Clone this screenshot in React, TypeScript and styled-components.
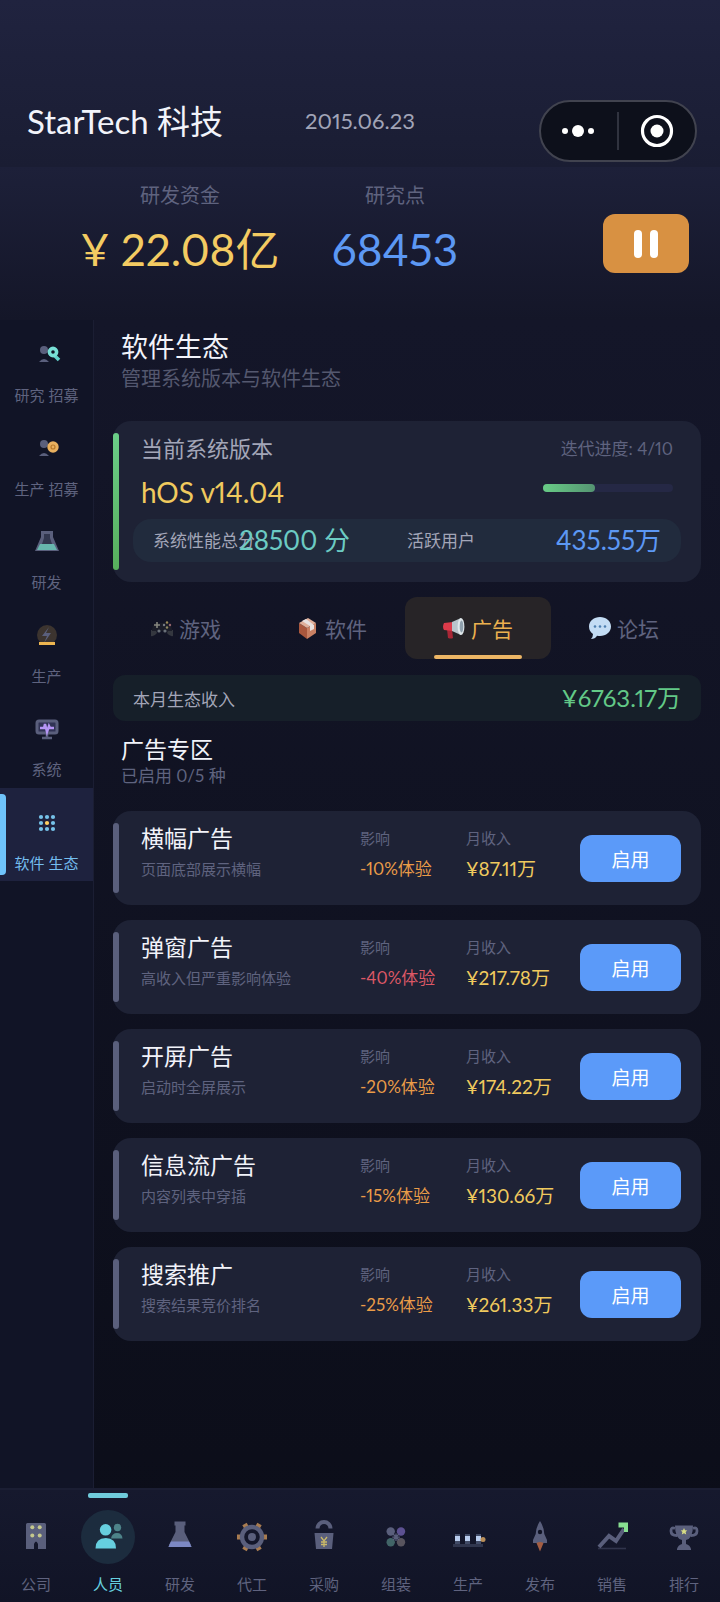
import React, { FC, ReactNode } from 'react';
import styled, { createGlobalStyle } from "styled-components";

const GlobalStyle = createGlobalStyle`
    * {
        box-sizing: border-box;
    }

    body {
        margin: 0;
        background: #0d0f1b;
        color: #f2f3fa;
        font-family: Lato, "Noto Sans CJK SC", sans-serif;
        font-variant-numeric: proportional-nums;
    }

    button {
        font-family: inherit;
        border: 0;
        cursor: pointer;
    }
`;

interface SideItem {
    label: string;
    icon: ReactNode;
    active?: boolean;
}

interface AdItem {
    name: string;
    desc: string;
    effect: string;
    income: string;
    severe?: boolean;
}

const PersonBase = () => (
    <>
        <circle cx="11" cy="9" r="4" fill="#5a5f7c" />
        <path d="M6 21q5-6 10 0z" fill="#5a5f7c" />
    </>
);

const sideItems: SideItem[] = [
    {
        label: "研究 招募",
        icon: (
            <svg width="28" height="28" viewBox="0 0 28 28">
                <PersonBase />
                <path d="M21 14l5 5" stroke="#62d2cb" strokeWidth="3.5" />
                <circle cx="20" cy="11" r="3.6" fill="#111425" stroke="#78e0d6" strokeWidth="3.6" />
            </svg>
        ),
    },
    {
        label: "生产 招募",
        icon: (
            <svg width="28" height="28" viewBox="0 0 28 28">
                <PersonBase />
                <circle cx="20" cy="12" r="5.7" fill="#e9b05f" />
                <circle cx="20" cy="12" r="2" fill="none" stroke="#b97929" strokeWidth="1.2" />
            </svg>
        ),
    },
    {
        label: "研发",
        icon: (
            <svg width="28" height="28" viewBox="0 0 28 28">
                <path d="M8 3h12v6l6 14H2L8 9z" fill="#5a5f7c" />
                <path d="M11 6h6v4l2 6H9l2-6z" fill="#32374f" />
                <path d="M7 16h14l3 6H4z" fill="#67b6ad" />
            </svg>
        ),
    },
    {
        label: "生产",
        icon: (
            <svg width="28" height="28" viewBox="0 0 28 28">
                <circle cx="14" cy="13" r="10" fill="#3c342f" />
                <path d="M16 5l-7 9h5l-3 7 7-10h-5z" fill="#5a5f7c" />
                <rect x="6" y="20" width="16" height="3" fill="#edb550" />
            </svg>
        ),
    },
    {
        label: "系统",
        icon: (
            <svg width="28" height="28" viewBox="0 0 28 28">
                <rect x="4" y="6" width="20" height="12" rx="2" fill="#303354" stroke="#5a5f7c" strokeWidth="3" />
                <path d="M14 19v4M9 23h10" stroke="#5a5f7c" strokeWidth="2.6" />
                <path d="M7 13h4l1-4 2 8 2-6 1 2h4" fill="none" stroke="#b595f4" strokeWidth="2.4" />
            </svg>
        ),
    },
    {
        label: "软件 生态",
        active: true,
        icon: (
            <svg width="28" height="28" viewBox="0 0 28 28">
                {[8, 14, 20].map((cy) => [8, 14, 20].map((cx) => (
                    <circle key={ cx + "-" + cy } cx={ cx } cy={ cy } r="2.1" fill={ cx === 14 && cy === 14 ? "#ffd062" : "#76c2e9" } />
                )))}
            </svg>
        ),
    },
];

const tabs = [
    {
        label: "游戏",
        icon: (
            <svg width="22" height="22" viewBox="0 0 22 22">
                <path d="M0 13q5-1 6 3-3 4-6 3zM22 13q-5-1-6 3 3 4 6 3z" fill="#34373f" />
                <path d="M4 6h14q3 3 3 8H1q0-5 3-8z" fill="#1b1d29" />
                <path d="M6 5v6M3 8h6" stroke="#86877f" strokeWidth="1.6" />
                <circle cx="16" cy="5.5" r="1.2" fill="#9b8b57" />
                <circle cx="16" cy="10.5" r="1.2" fill="#8f8860" />
                <circle cx="13" cy="8" r="1.2" fill="#777c83" />
                <circle cx="19" cy="8" r="1.2" fill="#95656b" />
                <circle cx="8" cy="14" r="1.6" fill="#697079" />
                <circle cx="14" cy="14" r="1.6" fill="#697079" />
            </svg>
        ),
    },
    {
        label: "软件",
        icon: (
            <svg width="22" height="22" viewBox="0 0 22 22">
                <path d="M2 6l8 5v11l-8-6z" fill="#a9573d" />
                <path d="M10 11l9-5v10l-9 6z" fill="#c98063" />
                <path d="M2 6l9-5 8 5-9 5z" fill="#e0b09b" />
                <path d="M5 4l4-2 8 6v4l-4 2V9z" fill="#e8e1df" />
            </svg>
        ),
    },
    {
        label: "广告",
        active: true,
        icon: (
            <svg width="22" height="22" viewBox="0 0 22 22">
                <path d="M4 12h5l1 9q-2 1-5 0z" fill="#a92736" />
                <path d="M1 6l9-1v9l-9-1q-2-3 0-7z" fill="#dc3b4a" />
                <path d="M9 5l9-4v17l-9-4z" fill="#b9c4cb" />
                <ellipse cx="18" cy="9.500" rx="3.4" ry="8.6" fill="#dfe7eb" />
                <ellipse cx="18.5" cy="9.500" rx="1.8" ry="6" fill="#8fa0ad" />
            </svg>
        ),
    },
    {
        label: "论坛",
        icon: (
            <svg width="22" height="22" viewBox="0 0 22 22">
                <path d="M11 0c6 0 11 4 11 9.500S17 19 11 19q-1 0-3-.3Q6 22 2 22q2-2 2-5-4-3-4-7.500C0 4 5 0 11 0z" fill="#c3dcf4" />
                <circle cx="6" cy="9.500" r="1.300" fill="#4d7fb0" />
                <circle cx="11" cy="9.500" r="1.300" fill="#4d7fb0" />
                <circle cx="16" cy="9.500" r="1.300" fill="#4d7fb0" />
            </svg>
        ),
    },
];

const ads: AdItem[] = [
    { name: "横幅广告", desc: "页面底部展示横幅", effect: "-10%体验", income: "¥87.11万" },
    { name: "弹窗广告", desc: "高收入但严重影响体验", effect: "-40%体验", income: "¥217.78万", severe: true },
    { name: "开屏广告", desc: "启动时全屏展示", effect: "-20%体验", income: "¥174.22万" },
    { name: "信息流广告", desc: "内容列表中穿插", effect: "-15%体验", income: "¥130.66万" },
    { name: "搜索推广", desc: "搜索结果竞价排名", effect: "-25%体验", income: "¥261.33万" },
];

const navItems: SideItem[] = [
    {
        label: "公司",
        icon: (
            <svg width="36" height="36" viewBox="0 0 36 36">
                <path d="M8 5.500q0-1.500 1.500-1.500h17q1.500 0 1.500 1.500V30h-8v-5q-2-5-4 0v5H8z" fill="#5a5f7c" />
                <g fill="#c4c78d">
                    <circle cx="14.300" cy="8.200" r="2" />
                    <circle cx="21.700" cy="8.200" r="2" />
                    <circle cx="14.300" cy="16.500" r="2" />
                    <circle cx="21.700" cy="16.500" r="2" />
                </g>
            </svg>
        ),
    },
    {
        label: "人员",
        active: true,
        icon: (
            <svg width="36" height="36" viewBox="0 0 36 36">
                <g fill="#4d8389">
                    <circle cx="27.500" cy="8.500" r="3.700" />
                    <path d="M21 19.500q1-5.500 6-5.500t5.500 5.500z" />
                </g>
                <g fill="#66cfdf">
                    <circle cx="15.600" cy="10.800" r="5.800" />
                    <path d="M5.500 29.500q0-10.500 10.300-10.500T26 29.500z" />
                </g>
            </svg>
        ),
    },
    {
        label: "研发",
        icon: (
            <svg width="36" height="36" viewBox="0 0 36 36">
                <path d="M12.500 2.500h11v4h-1V13L29 26H7l6.500-13V6.500h-1z" fill="#5a5f7c" />
                <path d="M9 22.500h18l2.700 5.500H6.300z" fill="#7c88c4" />
            </svg>
        ),
    },
    {
        label: "代工",
        icon: (
            <svg width="36" height="36" viewBox="0 0 36 36">
                <g fill="#a97c50">
                    {[0, 60, 120, 180, 240, 300].map((angle) => (
                        <rect key={ angle } x="29" y="15.500" width="4" height="5" transform={ `rotate(${ angle } 18 18)` } />
                    ))}
                </g>
                <circle cx="18" cy="18" r="10" fill="none" stroke="#5a5f7c" strokeWidth="4.400" />
                <circle cx="18" cy="18" r="4" fill="#5a5f7c" />
            </svg>
        ),
    },
    {
        label: "采购",
        icon: (
            <svg width="36" height="36" viewBox="0 0 36 36">
                <path d="M11.500 9.500a6.500 6.500 0 0 1 13 0" fill="none" stroke="#5a5f7c" strokeWidth="4" />
                <path d="M8.500 14h19l-1.500 16H10z" fill="#5a5f7c" />
                <path d="M15 18l3 4 3-4M18 22v6M15 23h6M15 25.500h6" fill="none" stroke="#c9b968" strokeWidth="1.300" />
            </svg>
        ),
    },
    {
        label: "组装",
        icon: (
            <svg width="36" height="36" viewBox="0 0 36 36">
                <circle cx="12.700" cy="12.500" r="4.200" fill="#5a5f7c" />
                <circle cx="23" cy="12.500" r="4.200" fill="#5d5192" />
                <circle cx="12.700" cy="23.200" r="4.200" fill="#416467" />
                <circle cx="23" cy="23.200" r="4.200" fill="#58545e" />
                <path d="M18 14.500v7.500M14.300 18.200h7.500M15 15l6 6M21 15l-6 6" stroke="#5a5f7c" strokeWidth="1.300" />
            </svg>
        ),
    },
    {
        label: "生产",
        icon: (
            <svg width="36" height="36" viewBox="0 0 36 36">
                <rect x="3" y="25" width="30" height="3" fill="#30364e" />
                {[5, 15, 26].map((x) => (
                    <g key={ x }>
                        <rect x={ x } y="15" width="5" height="10" fill="#414b66" />
                        <rect x={ x } y="17" width="5" height="5" fill="#b9cdee" />
                    </g>
                ))}
                <circle cx="33" cy="20.500" r="2.500" fill="#b98e59" />
            </svg>
        ),
    },
    {
        label: "发布",
        icon: (
            <svg width="36" height="36" viewBox="0 0 36 36">
                <path d="M18 2q4 6 4.300 13l2.700 6v3H11v-3l2.700-6Q14 8 18 2z" fill="#5a5f7c" />
                <circle cx="18" cy="13" r="2.200" fill="#111425" />
                <path d="M14.500 24q3.500-2 7 0L18 32.500z" fill="#a35d42" />
            </svg>
        ),
    },
    {
        label: "销售",
        icon: (
            <svg width="36" height="36" viewBox="0 0 36 36">
                <path d="M4 29.500h28" stroke="#30344c" strokeWidth="1.600" />
                <path d="M5 28l10-11 7 5 8-12" fill="none" stroke="#5a5f7c" strokeWidth="4" />
                <path d="M24.500 3.500h9.500V13h-4V8.500h-5.500z" fill="#88df91" />
            </svg>
        ),
    },
    {
        label: "排行",
        icon: (
            <svg width="36" height="36" viewBox="0 0 36 36">
                <path d="M9 9.500q-4-2-4 2.500t6 4.500M27 9.500q4-2 4 2.500t-6 4.500" fill="none" stroke="#5a5f7c" strokeWidth="2.800" />
                <path d="M9 6.500h18q0 13-7 14.500v4q4 1 5 5v1H11v-1q1-4 5-5v-4Q9 19.500 9 6.500z" fill="#5a5f7c" />
                <path d="M18 9l1 2.300 2.300.2-1.700 1.600.6 2.400-2.200-1.300-2.200 1.300.6-2.400-1.700-1.600 2.300-.2z" fill="#d8de85" />
            </svg>
        ),
    },
];

export const App: FC = () => {
    return (
        <Page>
            <GlobalStyle />
            <TopBar>
                <Company>StarTech 科技</Company>
                <GameDate>2015.06.23</GameDate>
                <Capsule>
                    <CapsuleButton aria-label="更多">
                        <svg width="36" height="14" viewBox="0 0 36 14" fill="#fff">
                            <circle cx="4" cy="7" r="3" />
                            <circle cx="17" cy="7" r="6" />
                            <circle cx="30" cy="7" r="3" />
                        </svg>
                    </CapsuleButton>
                    <CapsuleButton aria-label="关闭">
                        <svg width="34" height="34" viewBox="0 0 34 34">
                            <circle cx="17" cy="17" r="14.500" fill="none" stroke="#fff" strokeWidth="3.200" />
                            <circle cx="17" cy="17" r="6.500" fill="#fff" />
                        </svg>
                    </CapsuleButton>
                </Capsule>
            </TopBar>
            <Resources>
                <Resource $wide>
                    <ResourceLabel>研发资金</ResourceLabel>
                    <ResourceValue $color="#f3cb62">¥ 22.08亿</ResourceValue>
                </Resource>
                <Resource>
                    <ResourceLabel>研究点</ResourceLabel>
                    <ResourceValue $color="#5c98f4">68453</ResourceValue>
                </Resource>
                <PauseButton aria-label="暂停">
                    <svg width="24" height="28" viewBox="0 0 24 28" fill="#fff">
                        <rect width="8" height="28" rx="4" />
                        <rect x="16" width="8" height="28" rx="4" />
                    </svg>
                </PauseButton>
            </Resources>
            <Body>
                <Sidebar>
                    <SideList>
                        {sideItems.map((item) => (
                            <SideButton key={ item.label } $active={ item.active }>
                                {item.icon}
                                <span>{item.label}</span>
                            </SideButton>
                        ))}
                    </SideList>
                </Sidebar>
                <Main>
                    <Heading>
                        <h1>软件生态</h1>
                        <p>管理系统版本与软件生态</p>
                    </Heading>
                    <SystemCard>
                        <SystemRow>
                            <SystemTitle>当前系统版本</SystemTitle>
                            <Iteration>迭代进度: 4/10</Iteration>
                        </SystemRow>
                        <SystemRow>
                            <Version>hOS v14.04</Version>
                            <Track><Fill style={ { width: `${ 4 / 10 * 100 }%` } } /></Track>
                        </SystemRow>
                        <Stats>
                            <Stat>
                                <StatLabel>系统性能总分</StatLabel>
                                <StatValue $color="#6ccbc3">28500 分</StatValue>
                            </Stat>
                            <Stat $spread>
                                <StatLabel>活跃用户</StatLabel>
                                <StatValue $color="#5c98f4">435.55万</StatValue>
                            </Stat>
                        </Stats>
                    </SystemCard>
                    <Tabs>
                        {tabs.map((tab) => (
                            <Tab key={ tab.label } $active={ tab.active }>
                                {tab.icon}
                                {tab.label}
                            </Tab>
                        ))}
                    </Tabs>
                    <Revenue>
                        <span>本月生态收入</span>
                        <strong>¥6763.17万</strong>
                    </Revenue>
                    <Section>
                        <h2>广告专区</h2>
                        <p>已启用 0/5 种</p>
                    </Section>
                    <AdList>
                        {ads.map((ad) => (
                            <AdCard key={ ad.name }>
                                <AdInfo>
                                    <h3>{ad.name}</h3>
                                    <p>{ad.desc}</p>
                                </AdInfo>
                                <Effect $severe={ ad.severe }>
                                    <small>影响</small>
                                    <span>{ad.effect}</span>
                                </Effect>
                                <Income>
                                    <small>月收入</small>
                                    <span>{ad.income}</span>
                                </Income>
                                <EnableButton>启用</EnableButton>
                            </AdCard>
                        ))}
                    </AdList>
                </Main>
            </Body>
            <BottomNav>
                {navItems.map((item) => (
                    <NavButton key={ item.label } $active={ item.active }>
                        <NavIcon $active={ item.active }>{item.icon}</NavIcon>
                        <span>{item.label}</span>
                    </NavButton>
                ))}
            </BottomNav>
        </Page>
    );
}

const Page = styled.div`
    display: flex;
    flex-direction: column;
    min-height: 100vh;
    background: linear-gradient(#141629 320px, #0b0d18);
`;

const TopBar = styled.header`
    display: flex;
    align-items: center;
    padding: 100px 23px 5px 27px;
    background: linear-gradient(#20233f, #1a1d33);
`;

const Company = styled.div`
    flex: 0 0 278px;
    padding-bottom: 20px;
    font-size: 33px;
    line-height: 42px;
`;

const GameDate = styled.time`
    padding-bottom: 20px;
    font-size: 22px;
    line-height: 42px;
    color: #a1a4b7;
`;

const Capsule = styled.div`
    display: flex;
    width: 158px;
    height: 62px;
    margin-left: auto;
    padding: 10px 0;
    border: 2px solid #41434f;
    border-radius: 31px;
    background: #0d101b;
`;

const CapsuleButton = styled.button`
    flex: 1;
    display: flex;
    align-items: center;
    justify-content: center;
    padding: 0;
    background: none;

    & + & {
        border-left: 2px solid #30333f;
    }
`;

const Resources = styled.section`
    display: flex;
    align-items: flex-start;
    height: 153px;
    padding: 14px 31px 0 73px;
    background: linear-gradient(#1d2039, #141628);
`;

const Resource = styled.div<{ $wide?: boolean }>`
    width: ${ p => p.$wide ? 214 : 216 }px;
    text-align: center;
`;

const ResourceLabel = styled.div`
    font-size: 20px;
    line-height: 28px;
    color: #5f637f;
`;

const ResourceValue = styled.div<{ $color: string }>`
    margin-top: 12px;
    font-size: 44px;
    line-height: 56px;
    white-space: nowrap;
    color: ${ p => p.$color };
`;

const PauseButton = styled.button`
    display: flex;
    align-items: center;
    justify-content: center;
    width: 86px;
    height: 59px;
    margin: 33px 0 0 auto;
    border-radius: 12px;
    background: #d89142;
`;

const Body = styled.div`
    display: flex;
    flex: 1;
`;

const Sidebar = styled.aside`
    flex: 0 0 94px;
    border-right: 1px solid #1b1e33;
    background: #111426;
`;

const SideList = styled.nav`
    display: grid;
    grid-auto-rows: 1fr;
    height: 561px;
`;

const SideButton = styled.button<{ $active?: boolean }>`
    position: relative;
    display: flex;
    flex-direction: column;
    align-items: center;
    gap: 15px;
    padding: 21px 0 0;
    background: ${ p => p.$active ? "#1e223e" : "none" };
    color: ${ p => p.$active ? "#74bdee" : "#5f637f" };
    font-size: 15px;
    line-height: 22px;

    &::before {
        content: "";
        display: ${ p => p.$active ? "block" : "none" };
        position: absolute;
        left: 0;
        top: 6px;
        bottom: 6px;
        width: 6px;
        border-radius: 0 4px 4px 0;
        background: #6fc3fa;
    }
`;

const Main = styled.main`
    flex: 1;
    min-width: 0;
    padding: 10px 19px 24px;
`;

const Heading = styled.div`
    padding: 0 8px;

    h1 {
        margin: 0;
        font-size: 27px;
        font-weight: 400;
        line-height: 34px;
    }

    p {
        margin: 0;
        font-size: 20px;
        line-height: 28px;
        color: #54586f;
    }
`;

const Card = styled.section`
    position: relative;
    border-radius: 18px;
    background: #1e2235;

    &::before {
        content: "";
        position: absolute;
        left: 0;
        top: 12px;
        bottom: 12px;
        width: 6px;
        border-radius: 3px;
        background: #5a5f7c;
    }
`;

const SystemCard = styled(Card)`
    margin-top: 29px;
    padding: 12px 20px 20px;

    &::before {
        background: linear-gradient(#6bce88, #57ae5c);
    }
`;

const SystemRow = styled.div`
    display: flex;
    align-items: center;
    justify-content: space-between;
    padding: 0 8px;
`;

const SystemTitle = styled.div`
    font-size: 22px;
    line-height: 32px;
    color: #a3a6b8;
`;

const Iteration = styled.div`
    font-size: 17px;
    line-height: 32px;
    color: #5f637f;
`;

const Version = styled.div`
    font-size: 28px;
    line-height: 54px;
    color: #f0ca5e;
`;

const Track = styled.div`
    width: 130px;
    height: 8px;
    margin-bottom: 9px;
    border-radius: 4px;
    background: #252845;
`;

const Fill = styled.div`
    height: 100%;
    border-radius: 4px;
    background: linear-gradient(90deg, #68cc86, #559472);
`;

const Stats = styled.div`
    display: grid;
    grid-template-columns: 1fr 1fr;
    padding: 0 20px;
    border-radius: 18px;
    background: #212b3d;
`;

const Stat = styled.div<{ $spread?: boolean }>`
    display: flex;
    align-items: center;
    justify-content: ${ p => p.$spread ? "space-between" : "flex-start" };
    white-space: nowrap;
`;

const StatLabel = styled.span`
    width: 86px;
    font-size: 17px;
    line-height: 43px;
    color: #a3a6b8;
`;

const StatValue = styled.span<{ $color: string }>`
    font-size: 26px;
    line-height: 43px;
    color: ${ p => p.$color };
`;

const Tabs = styled.div`
    display: grid;
    grid-template-columns: repeat(4, 1fr);
    margin-top: 15px;
    padding-right: 4px;
`;

const Tab = styled.button<{ $active?: boolean }>`
    position: relative;
    display: flex;
    align-items: center;
    justify-content: center;
    gap: 6px;
    height: 62px;
    padding: 0;
    border-radius: 12px;
    background: ${ p => p.$active ? "#272427" : "none" };
    color: ${ p => p.$active ? "#ecb14f" : "#5f637f" };
    font-size: 21px;

    &::after {
        content: "";
        display: ${ p => p.$active ? "block" : "none" };
        position: absolute;
        left: 20%;
        right: 20%;
        bottom: 0;
        height: 4px;
        border-radius: 2px;
        background: #edb665;
    }
`;

const Revenue = styled.div`
    display: flex;
    align-items: center;
    justify-content: space-between;
    height: 46px;
    margin-top: 16px;
    padding: 0 20px;
    border-radius: 12px;
    background: #161f29;
    font-size: 17px;
    color: #a3a6b8;

    strong {
        font-size: 24px;
        font-weight: 400;
        line-height: 32px;
        color: #63c987;
    }
`;

const Section = styled.div`
    padding: 12px 8px 0;

    h2 {
        margin: 0;
        font-size: 23px;
        font-weight: 400;
        line-height: 32px;
    }

    p {
        margin: 0;
        font-size: 17px;
        line-height: 22px;
        color: #5f637f;
    }
`;

const AdList = styled.div`
    display: grid;
    gap: 15px;
    margin-top: 24px;
`;

const AdCard = styled(Card)`
    display: grid;
    grid-template-columns: 1fr 106px 114px 101px;
    height: 94px;
    padding: 10px 20px 10px 28px;
`;

const AdInfo = styled.div`
    h3 {
        margin: 0;
        font-size: 23px;
        font-weight: 400;
        line-height: 34px;
    }

    p {
        margin: 0;
        font-size: 15px;
        line-height: 28px;
        color: #5f637f;
    }
`;

const Figure = styled.div`
    display: flex;
    flex-direction: column;
    white-space: nowrap;

    small {
        font-size: 15px;
        line-height: 34px;
        color: #5f637f;
    }

    span {
        line-height: 28px;
    }
`;

const Effect = styled(Figure)<{ $severe?: boolean }>`
    font-size: 17px;
    color: ${ p => p.$severe ? "#dc5866" : "#ea9c48" };
`;

const Income = styled(Figure)`
    font-size: 19px;
    color: #f0ca5e;
`;

const EnableButton = styled.button`
    align-self: center;
    height: 47px;
    padding: 0;
    border-radius: 12px;
    background: #5b9af9;
    color: #fff;
    font-size: 19px;
`;

const BottomNav = styled.nav`
    display: grid;
    grid-template-columns: repeat(10, 1fr);
    height: 114px;
    border-top: 2px solid #1b1e33;
    background: linear-gradient(#16192e, #111426);
`;

const NavButton = styled.button<{ $active?: boolean }>`
    position: relative;
    display: flex;
    flex-direction: column;
    align-items: center;
    gap: 9px;
    padding: 20px 0 0;
    background: none;
    color: ${ p => p.$active ? "#66cfdf" : "#5f637f" };
    font-size: 15px;
    line-height: 22px;

    &::before {
        content: "";
        display: ${ p => p.$active ? "block" : "none" };
        position: absolute;
        top: 3px;
        width: 40px;
        height: 5px;
        border-radius: 2px;
        background: #6fcbdb;
    }
`;

const NavIcon = styled.span<{ $active?: boolean }>`
    display: flex;
    align-items: center;
    justify-content: center;
    width: 54px;
    height: 54px;
    border-radius: 50%;
    background: ${ p => p.$active ? "#1c2c3e" : "none" };
`;

export default App;
